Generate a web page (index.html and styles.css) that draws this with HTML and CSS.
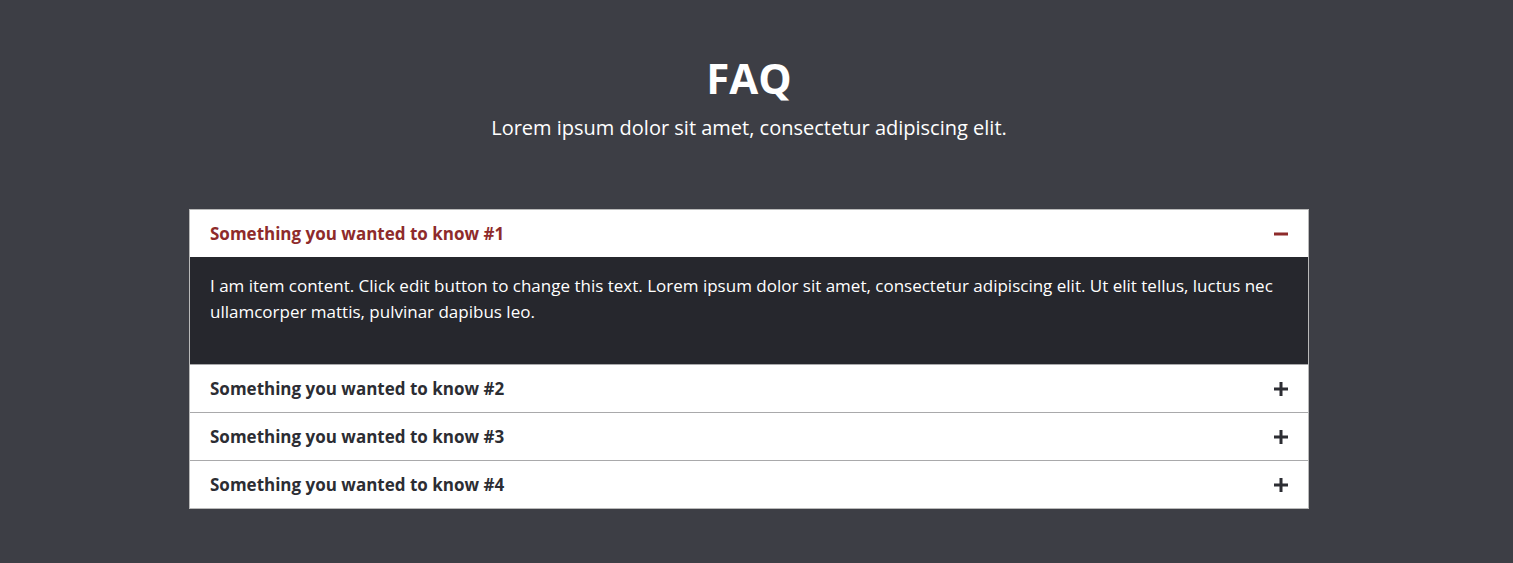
FILE: index.html
```html
<!DOCTYPE html>
<html lang="en">
<head>
<meta charset="utf-8">
<title>FAQ</title>
<link rel="stylesheet" href="styles.css">
</head>
<body>
<section class="faq">
  <header class="faq-head">
    <h2 class="faq-title">FAQ</h2>
    <p class="faq-sub">Lorem ipsum dolor sit amet, consectetur adipiscing elit.</p>
  </header>
  <div class="accordion">
    <div class="item open">
      <div class="item-head">
        <span class="item-title">Something you wanted to know #1</span>
        <svg class="icon" viewBox="0 0 14 14" width="14" height="14"><rect x="0" y="5.5" width="14" height="3" fill="currentColor"/></svg>
      </div>
      <div class="item-body">
        <p>I am item content. Click edit button to change this text. Lorem ipsum dolor sit amet, consectetur adipiscing elit. Ut elit tellus, luctus nec ullamcorper mattis, pulvinar dapibus leo.</p>
      </div>
    </div>
    <div class="item">
      <div class="item-head">
        <span class="item-title">Something you wanted to know #2</span>
        <svg class="icon" viewBox="0 0 14 14" width="14" height="14"><rect x="0" y="5.5" width="14" height="3" fill="currentColor"/><rect x="5.5" y="0" width="3" height="14" fill="currentColor"/></svg>
      </div>
    </div>
    <div class="item">
      <div class="item-head">
        <span class="item-title">Something you wanted to know #3</span>
        <svg class="icon" viewBox="0 0 14 14" width="14" height="14"><rect x="0" y="5.5" width="14" height="3" fill="currentColor"/><rect x="5.5" y="0" width="3" height="14" fill="currentColor"/></svg>
      </div>
    </div>
    <div class="item">
      <div class="item-head">
        <span class="item-title">Something you wanted to know #4</span>
        <svg class="icon" viewBox="0 0 14 14" width="14" height="14"><rect x="0" y="5.5" width="14" height="3" fill="currentColor"/><rect x="5.5" y="0" width="3" height="14" fill="currentColor"/></svg>
      </div>
    </div>
  </div>
</section>
</body>
</html>
```
FILE: styles.css
```css
html, body {
  margin: 0;
  padding: 0;
}
body {
  background: #3d3e45;
  font-family: "Open Sans", "Noto Sans", sans-serif;
  color: #ffffff;
  height: 563px;
  overflow: hidden;
}
.faq {
  width: 1498px;
  display: flex;
  flex-direction: column;
  align-items: center;
  padding-top: 52px;
}
.faq-head {
  text-align: center;
}
.faq-title {
  margin: 0;
  font-size: 42px;
  font-weight: 700;
  line-height: 52px;
}
.faq-sub {
  margin: 0;
  margin-top: 10px;
  font-size: 20px;
  line-height: 28px;
}
.accordion {
  margin-top: 67px;
  width: 1118px;
  border: 1px solid #b9b9b9;
  background: #ffffff;
}
.item + .item {
  border-top: 1px solid #a9a9ab;
}
.item-head {
  height: 47px;
  display: flex;
  align-items: center;
  justify-content: space-between;
  padding: 0 20px;
  background: #ffffff;
  color: #2c2d33;
}
.item.open .item-head {
  color: #8e2b2b;
}
.item-title {
  font-size: 17px;
  font-weight: 700;
}
.icon {
  display: block;
  margin-right: 0;
}
.item-body {
  background: #26272d;
  padding: 15px 20px 39px;
  border-top: 1px solid #26272d;
}
.item-body p {
  margin: 0;
  font-size: 17px;
  line-height: 26px;
  color: #ffffff;
}
```
